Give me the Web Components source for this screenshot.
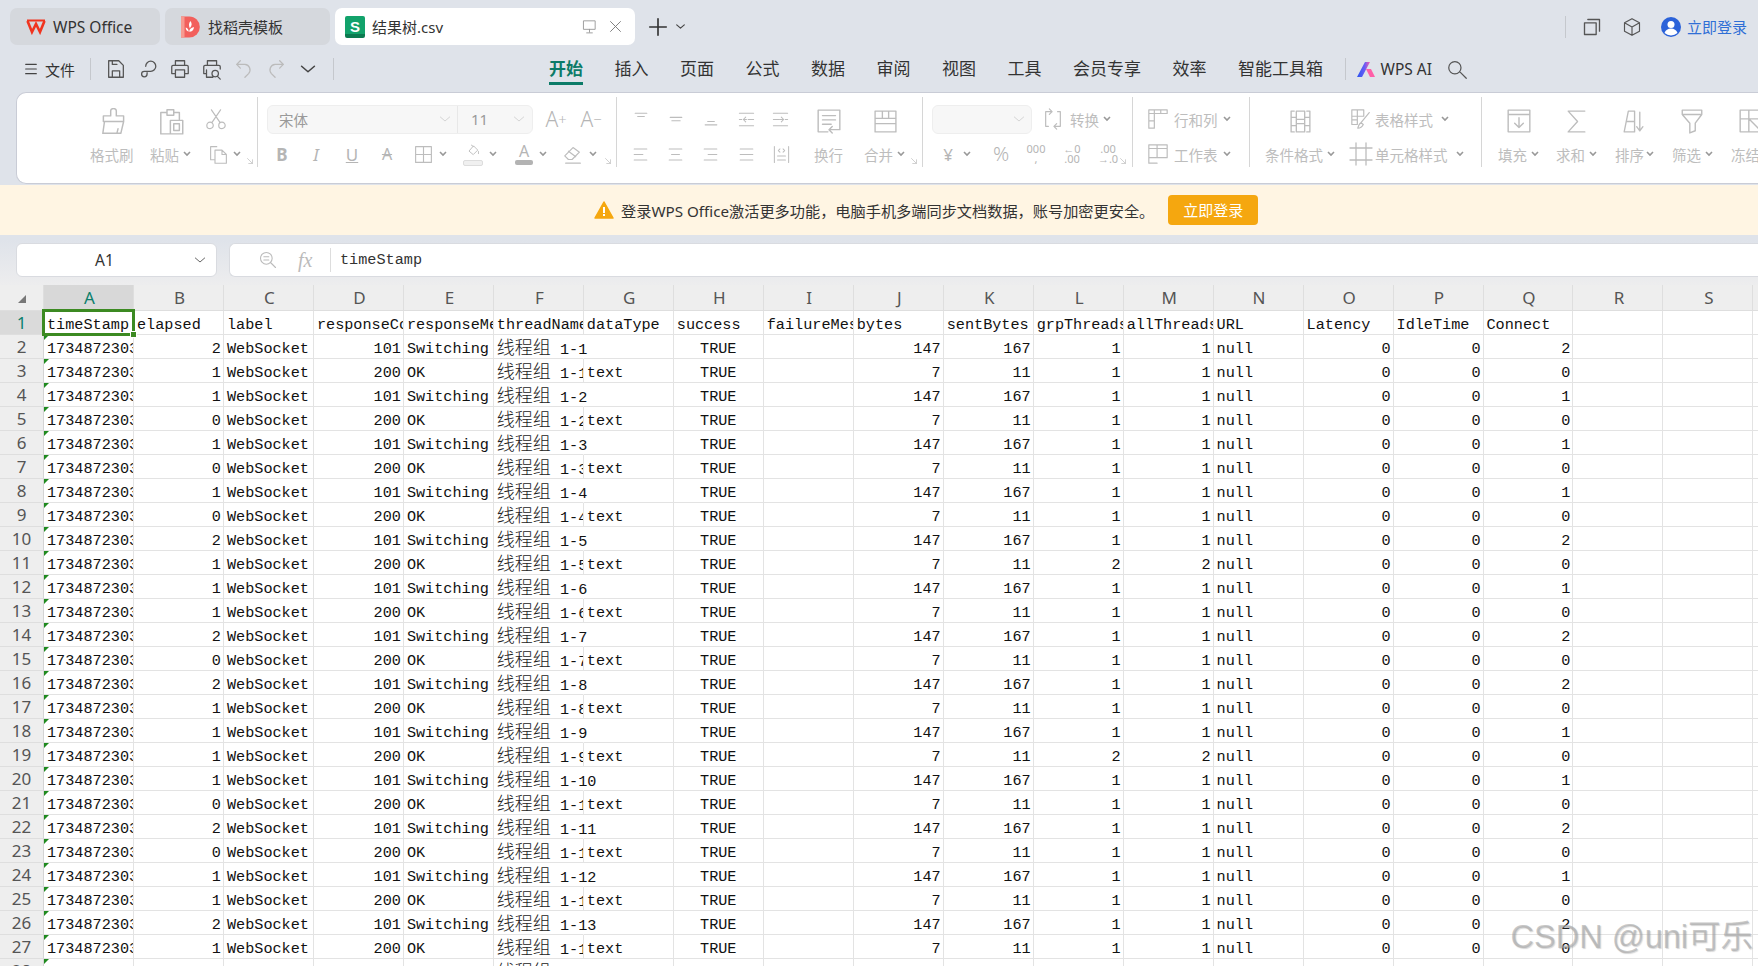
<!DOCTYPE html>
<html lang="zh"><head><meta charset="utf-8"><title>结果树.csv</title>
<style>html,body{margin:0;padding:0;width:1758px;height:966px;overflow:hidden;background:#dfe3ea}</style>
</head><body>
<wps-app>
  <wps-tabbar></wps-tabbar>
  <wps-menubar></wps-menubar>
  <wps-ribbon></wps-ribbon>
  <wps-banner>登录WPS Office激活更多功能，电脑手机多端同步文档数据，账号加密更安全。</wps-banner>
  <wps-formula cell="A1">timeStamp</wps-formula>
  <wps-sheet></wps-sheet>
  <wps-watermark>CSDN @uni可乐</wps-watermark>
</wps-app>
<script>
const UI='"Noto Sans","Noto Sans CJK SC",sans-serif';
const P={
 brush:'M9.5 2.5a2.5 2 0 0 1 5 0V7H21v5H3V7h6.5z M4 12 2.5 22.5h16L21 12 M15 22.5l1-4',
 paste:'M8 4H2.5v19H10 M8 4V1.5h6V4 M8 4v2.5h6V4 M14 4h5v6 M11 11h11v12H11z M14 14h5v6h-5z',
 scissors:'M7.5 16 17 2 M16.5 16 7 2 M9 19a3.5 3.5 0 1 1-7 0 3.5 3.5 0 0 1 7 0z M22 19a3.5 3.5 0 1 1-7 0 3.5 3.5 0 0 1 7 0z',
 copy:'M10 3H3v15h4 M8 7h8l5 5v10H8z M16 7v5h5',
 borders:'M3 3h18v18H3z M12 3v18 M3 12h18',
 eraser:'M3 14 12 5l7 5-8 8H7z M7 9l8 6 M4 22h16',
 fillc:'M6 11l6-7 6 6-6 6z M9 3l3 2 M19 12v3',
 atop:'M5 5h14 M8 9h8', amid:'M5 10h14 M7 14h10', abot:'M8 15h8 M5 19h14',
 indl:'M3 4h18 M3 20h18 M3 12h3 M14 12h7 M12 12H8 M11 9l-3 3 3 3',
 indr:'M3 4h18 M3 20h18 M3 12h7 M18 12h3 M11 12h5 M13 9l3 3-3 3',
 left:'M4 5h16 M4 12h11 M4 19h16', center:'M4 5h16 M7 12h10 M4 19h16', right:'M4 5h16 M9 12h11 M4 19h16', just:'M4 5h16 M4 12h16 M4 19h16',
 dist:'M3 2v20 M21 2v20 M7 19h10 M7 14h10 M10 5 8 7l2 2 M14 5l2 2-2 2',
 wrap:'M22 13V2H2v20h9 M6 7h12 M6 11h12 M6 15h8 M22 13v7H12 M15 17l-3 3 3 3',
 merge:'M2 2h20v20H2z M2 9h20 M9 2v7 M15 2v7 M2 14h20',
 conv:'M11 4H4v16h3 M13 20h7V4h-3 M8 1l3 3-3 3 M16 17l-3 3 3 3',
 rowcol:'M2 2h20v4H2z M8 2v4 M15 2v4 M2 6v16h6V6 M2 14h6',
 sheet:'M2 2h20v4H2z M2 6v16h9 M2 6h20v10H2 M11 2v14',
 cond:'M6 2H3v20h3 M18 2h3v20h-3 M8 2h8v20H8z M8 10h8 M8 14h8 M3 8h5 M16 8h5 M3 16h5 M16 16h5',
 tstyle:'M2 2h13v7H2z M8 2v7 M2 9v9h6V9 M2 13h6 M21 5 12 16 M12 16c-2 1-3 4-3.5 6 3 0 5-2 6-4z',
 cstyle:'M7 1v22 M17 1v22 M1 6h22 M1 18h22',
 fill:'M2 2h20v20H2z M2 6h20 M12 9v9 M8 14l4 4 4-4',
 sum:'M20 2H4l9 10-9 10h16',
 sort:'M4 22 8 2h6v20H4 M6 12h8 M19 3v18 M16 17l3 4 3-4',
 filter:'M3 2h18v4l-6 8v7l-5 2v-9L3 6z M3 6h18',
 freeze:'M2 2h20v20H2z M10 2v20 M2 10h20 M10 10l12 12',
 launch:'M6 6l12 12 M18 9v9H9',
 save:'M4 3h11l5 5v13H4z M8 21v-7h8v7 M8 3v4h5',
 link:'M9.5 9A5.5 5.5 0 1 1 15 14.5H8a3 3 0 1 0 3 3V16',
 print:'M7 8V3h10v5 M7 17H3V9.5A1.5 1.5 0 0 1 4.5 8h15A1.5 1.5 0 0 1 21 9.5V17h-4 M7 13h10v8H7z',
 prev:'M7 8V3h10v5 M6 17H3V9.5A1.5 1.5 0 0 1 4.5 8h15A1.5 1.5 0 0 1 21 9.5V12 M6 13v8h7 M19 17a3.5 3.5 0 1 1-7 0 3.5 3.5 0 0 1 7 0z M18 20l3 3',
 undo:'M8 3 4 7l4 4 M4 7h9a6 6 0 0 1 4 10l-4 4',
 redo:'M16 3l4 4-4 4 M20 7h-9a6 6 0 0 0-4 10l4 4',
 chev:'M5 9l7 6 7-6',
 menu:'M4 5h16 M4 12h16 M4 19h16',
 search:'M16 10a7 7 0 1 1-14 0 7 7 0 0 1 14 0z M15 15l7 7',
 cube:'M12 2l9 5v10l-9 5-9-5V7z M3 7l9 5 9-5 M12 12v10',
 win:'M3 7h14v14H3z M7 3h14v14',
 mon:'M4 4h16v12H4z M12 16v4 M8 21h8',
 x:'M5 5l14 14 M19 5 5 19',
 plus:'M12 3v18 M3 12h18',
 lens:'M17 10a7 7 0 1 1-14 0 7 7 0 0 1 14 0z M15 15l6 6 M7 8h6 M7 12h6'
};
const svg=(n,s,c,w)=>`<svg width="${s}" height="${s}" viewBox="0 0 24 24" fill="none" stroke="${c||'currentColor'}" stroke-width="${w||1.3}" stroke-linejoin="round" stroke-linecap="round" style="display:block"><path d="${P[n]}"/></svg>`;
function shadow(el,html){el.attachShadow({mode:'open'}).innerHTML=html}

class WpsApp extends HTMLElement{connectedCallback(){shadow(this,`<style>:host{display:flex;flex-direction:column;position:relative;width:1758px;height:966px;overflow:hidden;background:linear-gradient(#dfe3ea 0,#dfe3ea 240px,#ededee 285px);font-family:${UI}}</style><slot></slot>`)}}

class WpsTabbar extends HTMLElement{connectedCallback(){shadow(this,`<style>
:host{display:flex;align-items:center;height:37px;padding:8px 0 3px 10px;flex:none;color:#333;font-size:15px}
.t{height:37px;box-sizing:border-box;border-radius:7px;background:#d5d8dd;display:flex;align-items:center;flex:none;white-space:nowrap}
.a{width:150px;padding-left:16px;font-size:15.5px;margin-right:5px}
.b{width:165px;padding-left:16px;margin-right:5px}
.c{width:300px;padding-left:10px;background:#fff;margin-right:12px}
.a svg{margin-right:7px}.b svg{margin-right:7px}
.s{width:20px;height:22px;border-radius:2px;background:linear-gradient(#12a26b 80%,#0b7a50 80%);color:#fff;font:bold 15px "Liberation Sans",sans-serif;display:flex;align-items:center;justify-content:center;margin-right:7px;flex:none}
.sp{flex:1}
.r{display:flex;align-items:center;margin-left:auto;padding-right:11px}
.sep{width:1px;height:22px;background:#c5c8cd}
a{color:#2f6fd6;font-size:15px;margin-left:6px}
</style>
<div class="t a"><svg width="20" height="16" viewBox="0 0 20 16" fill="none"><path d="M1.5 2 6 13l4-8 4 8 4.500-11" stroke="#f0341f" stroke-width="2.600" stroke-linejoin="miter"/><path d="M1 1.500h18" stroke="#f0341f" stroke-width="2"/></svg>WPS Office</div>
<div class="t b"><svg width="20" height="22" viewBox="1 1 17 18"><path d="M1 1h7a9 9 0 0 1 0 18H1z" fill="#f2605c"/><path d="M1 1h3v18H1z" fill="#f79a90"/><path d="M9 5c1.500 2 1.500 4-.5 6-1-2-1-4 .5-6zM8 14c0-2 1.500-3.500 4-4 0 2.500-1.500 4-4 4zM7.500 14c-1.500-.5-2.500-1.500-2.500-3.500 1.500.5 2.500 1.500 2.500 3.500z" fill="#fff"/></svg>找稻壳模板</div>
<div class="t c"><span class="s">S</span>结果树.csv<span class="sp"></span><span style="color:#999;margin-right:9px">${svg('mon',17)}</span><span style="color:#777;margin-right:11px">${svg('x',17)}</span></div>
<span style="color:#333">${svg('plus',22,'#333',1.8)}</span><span style="color:#444;margin-left:5px">${svg('chev',13,'#444',2.2)}</span>
<div class="r"><span class="sep"></span><span style="margin-left:16px;color:#555">${svg('win',20,'#555',1.6)}</span><span style="margin-left:20px">${svg('cube',20,'#555',1.4)}</span>
<svg style="margin-left:19px" width="20" height="20" viewBox="0 0 20 20"><circle cx="10" cy="10" r="10" fill="#2b62d9"/><circle cx="10" cy="7.500" r="3.500" fill="#fff"/><path d="M3.500 16c1-3 3.500-4.500 6.500-4.500s5.500 1.500 6.500 4.500a10 10 0 0 1-13 0z" fill="#fff"/></svg><a>立即登录</a></div>`)}}

class WpsMenubar extends HTMLElement{connectedCallback(){
 const items=['插入','页面','公式','数据','审阅','视图','工具','会员专享','效率','智能工具箱'];
 shadow(this,`<style>
:host{display:flex;align-items:center;height:44px;flex:none;color:#333;font-size:17px;position:relative;box-sizing:border-box;padding:0 0 2px 23px;white-space:nowrap}
.sep{width:1px;height:22px;background:#c5c8cd;flex:none}
.ic{margin-right:10px;flex:none}
.m{margin-right:31.500px;flex:none;line-height:42px;height:42px;position:relative}
.on{color:#0c7b68;font-weight:700}
.on::after{content:"";position:absolute;left:0;right:0;bottom:5px;height:3px;background:#0c7b68}
</style>
<span style="flex:none;margin-right:6px">${svg('menu',16,'#444',1.7)}</span><span style="font-size:15px;margin-right:15px">文件</span><span class="sep" style="margin-right:14px"></span>
${['save','link','print','prev'].map(n=>`<span class="ic">${svg(n,22,'#555',1.4)}</span>`).join('')}
<span class="ic">${svg('undo',22,'#bbb',1.4)}</span><span class="ic">${svg('redo',22,'#bbb',1.4)}</span><span class="ic" style="margin-right:14px">${svg('chev',22,'#444',1.7)}</span>
<span class="sep" style="margin-right:215px"></span>
<span class="m on">开始</span>${items.map(t=>`<span class="m">${t}</span>`).join('')}
<span class="sep" style="margin:0 11px 0 -10px"></span>
<svg width="19" height="17" viewBox="0 0 19 17" style="flex:none;margin-right:5px"><defs><linearGradient id="g" x1="0" x2="1"><stop offset="0" stop-color="#2a55f0"/><stop offset=".6" stop-color="#6a5cf5"/><stop offset="1" stop-color="#ff5fa8"/></linearGradient></defs><path d="M0 16 8 1h5L5 16z" fill="url(#g)"/><path d="M9 8h5l4 8h-5z" fill="#ff5fa8"/></svg>
<span style="font-size:15.500px;color:#333;margin-right:15px">WPS AI</span>${svg('search',21,'#555',1.4)}`)}}

const I=(n,cx,s=20)=>({x:cx-s/2,w:s,h:svg(n,s),st:s>=25?'margin-top:4px;':''});
const T=(t,x,w)=>({x,w,h:t,cls:'tx'});
const C=cx=>({x:cx-4,w:8,h:`<svg width="8" height="6" viewBox="0 0 8 6" style="display:block" fill="none" stroke="#999" stroke-width="1.600"><path d="M1 1l3 3 3-3"/></svg>`});
const Q=cx=>({x:cx-5,w:10,cls:'ln',h:svg('launch',10,'#c8c8c8',2)});
const G=(t,cx,w,st='')=>({x:cx-w/2,w,h:t,cls:'gl',st});
const ROW=(start,items)=>{let c=start,o='';for(const i of items){o+=`<div class="i ${i.cls||''}" style="${i.st||''}margin-left:${(i.x-c).toFixed(1)}px;width:${i.w}px;">${i.h}</div>`;c=i.x+i.w}return o};
const GROUPS=[
 [16,257,[I('brush',112,27),I('paste',170,27),I('scissors',215,22)],
  [T('格式刷',89,44),T('粘贴',149,29),C(186),I('copy',217,21),C(236),Q(249)]],
 [258,616,[{x:267,w:266,h:`<div class="fs"><span style="width:158px">宋体</span><i>${svg('chev',16,'#ccc',1.2)}</i><b></b><span style="width:53px;padding-left:13px;box-sizing:border-box;font-size:15px">11</span><i>${svg('chev',16,'#ccc',1.2)}</i></div>`},
   G('A<sup>+</sup>',556,26,'font-size:21px;font-weight:300;'),G('A<sup>−</sup>',591,26,'font-size:21px;font-weight:300;')],
  [G('<b>B</b>',282,14,'font-size:17px;'),G('<em>I</em>',316,14,'font-size:17px;'),G('<u>U</u>',352,14,'font-size:17px;'),G('<s>A</s>',387,16,'font-size:16px;'),I('borders',423,21),C(443),
   {x:462,w:22,h:`<div style="display:flex;flex-direction:column;align-items:center">${svg('fillc',17)}<span style="width:18px;height:4px;background:#f0f0f0;border:1px solid #ddd;border-radius:2px"></span></div>`},C(493),
   {x:514,w:20,h:`<div style="display:flex;flex-direction:column;align-items:center;line-height:15px;font-size:16px" class="gl">A<span style="width:18px;height:5px;background:#b3b3b3;border-radius:2px;margin-top:1px"></span></div>`},C(543),
   I('eraser',573,22),C(593),Q(608)]],
 [617,922,[I('atop',641),I('amid',676),I('abot',711),I('indl',746,19),I('indr',780,19),I('wrap',829,26),I('merge',885,25)],
  [I('left',640,19),I('center',675,19),I('right',710,19),I('just',746,19),I('dist',781,19),T('换行',814,30),T('合并',864,30),C(901),Q(914)]],
 [923,1132,[{x:932,w:100,h:`<div class="fs" style="justify-content:flex-end"><i>${svg('chev',16,'#ccc',1.2)}</i></div>`},I('conv',1053,22),T('转换',1070,30),C(1107)],
  [G('¥',948,14,'font-size:17px;'),C(967),G('%',1001,18,'font-size:20px;font-weight:300;'),G('<span class="st">000<br>,</span>',1036,22),G('<span class="st">←0<br>.00</span>',1072,24),G('<span class="st">.00<br>→.0</span>',1108,24),Q(1123)]],
 [1133,1249,[I('rowcol',1158,22),T('行和列',1174,44),C(1227)],[I('sheet',1158,22),T('工作表',1174,44),C(1227)]],
 [1250,1481,[I('cond',1300,25),I('tstyle',1361,22),T('表格样式',1375,60),C(1445)],
  [T('条件格式',1265,60),C(1331),I('cstyle',1361,24),T('单元格样式',1375,75),C(1460)]],
 [1482,1800,[I('fill',1519,26),I('sum',1576,25),I('sort',1632,25),I('filter',1692,26),I('freeze',1751,26)],
  [T('填充',1498,29),C(1535),T('求和',1556,29),C(1593),T('排序',1615,29),C(1650),T('筛选',1672,29),C(1709),T('冻结',1731,29)]]
];
class WpsRibbon extends HTMLElement{connectedCallback(){shadow(this,`<style>
:host{display:flex;flex:none;height:92px;box-sizing:border-box;margin-left:16px;background:#fff;border-radius:10px 0 0 10px;border:1px solid #c9ccd6;border-width:1px 0 1px 1px;padding-top:4px;color:#bdbdbd;font-size:14.500px;overflow:hidden;align-items:flex-start}
.g{flex:none;height:70px;box-sizing:border-box;border-right:1px solid #d6d6d6;display:flex;flex-direction:column}
.g.e{border-right:0}
.r{display:flex;align-items:center;flex:none;white-space:nowrap}
.r1{height:44px}.r2{height:26px}
.i{flex:none;display:flex;align-items:center;justify-content:center}
.tx{justify-content:flex-start}
.ln{align-self:flex-end;margin-bottom:1px}
.gl{color:#b5b5b5;font-family:"Noto Sans",sans-serif;line-height:1}
.gl sup{font-size:.7em;line-height:0;vertical-align:.55em}
.st{display:block;font-size:11px;line-height:10px;text-align:center}
.fs{width:100%;height:29px;box-sizing:border-box;background:#f7f7f7;border:1px solid #eee;border-radius:6px;display:flex;align-items:center;color:#9a9a9a;font-size:14.500px;padding-left:11px}
.fs i{display:block;flex:none;width:16px;margin-right:4px}
.fs b{width:1px;height:27px;background:#e8e8e8;margin-left:0}
.fs span{flex:none}
</style>${GROUPS.map((g,k)=>{const w=g[1]-g[0]+1;return `<div class="g ${k==6?'e':''}" style="width:${k==0?w-1:w}px"><div class="r r1">${ROW(g[0],g[2])}</div><div class="r r2">${ROW(g[0],g[3])}</div></div>`}).join('')}`)}}

class WpsBanner extends HTMLElement{connectedCallback(){shadow(this,`<style>
:host{display:flex;align-items:center;flex:none;height:50px;margin-top:1px;background:#fff5e3;padding:0 0 1px 594px;color:#333;font-size:15.200px;white-space:nowrap;box-sizing:border-box}
svg{margin-right:7px;flex:none}
button{all:unset;box-sizing:border-box;margin-left:14px;width:90px;height:30px;background:#f5a70f;color:#fff;border-radius:4px;text-align:center;font-size:15px;line-height:30px;flex:none}
</style><svg width="20" height="18" viewBox="0 0 20 18"><path d="M10 1 19 17H1z" fill="#f5a70f" stroke="#f5a70f" stroke-linejoin="round" stroke-width="1.500"/><path d="M9 6h2v6H9zM9 13h2v2H9z" fill="#fff"/></svg><slot></slot><button>立即登录</button>`)}}

class WpsFormula extends HTMLElement{connectedCallback(){shadow(this,`<style>
:host{display:flex;flex:none;height:34px;margin-top:8px;margin-bottom:8px;padding-left:16px;gap:12px;box-sizing:content-box}
.b{background:#fff;border:1px solid #d9dbe0;border-radius:6px;box-sizing:border-box;height:34px;display:flex;align-items:center;color:#333}
.n{width:201px;flex:none;font-size:15.500px;padding-right:8px}
.n span{flex:1;text-align:center}
.f{flex:1;border-radius:6px 0 0 6px;border-right:0}
.ic{margin-left:28px;flex:none}
.fx{font:italic 20px "Liberation Serif",serif;color:#bbb;width:22px;margin-left:20px;flex:none}
.sep{width:1px;height:24px;background:#ddd;margin:0 9px 0 10px;flex:none}
.v{font:15.200px "Liberation Mono",monospace;color:#333}
</style><div class="b n"><span>${this.getAttribute('cell')}</span>${svg('chev',16,'#666',1.5)}</div>
<div class="b f"><span class="ic">${svg('lens',20,'#bbb',1.3)}</span><span class="fx">fx</span><span class="sep"></span><span class="v"><slot></slot></span></div>`)}}

class WpsSheet extends HTMLElement{connectedCallback(){
 const cols='ABCDEFGHIJKLMNOPQRSTU'.split('');
 const heads=['timeStamp','elapsed','label','responseCode','responseMessage','threadName','dataType','success','failureMessage','bytes','sentBytes','grpThreads','allThreads','URL','Latency','IdleTime','Connect'];
 const B=[2,1,1,0,1,0,1,0,2,1,1,1,2,0,2,1,1,1,1,0,2,0,1,1,2,1,1];
 const Q=[2,0,1,0,1,0,1,0,2,0,1,0,2,0,2,0,1,0,1,0,2,0,1,0,2,0,1];
 let h='<div class="hd corner"><i></i></div>';
 cols.forEach((c,i)=>h+=`<div class="hd ch${i==0?' on':''}">${c}</div>`);
 h+='<div class="hd rh on">1</div>';
 cols.forEach((c,i)=>{const t=heads[i]||'';h+=`<div class="c l${i==0?' a1':''}"><span>${t}</span>${i==0?'<em></em>':''}</div>`});
 for(let r=2;r<=28;r++){
  const odd=r%2==1,k=r-2,n=Math.floor(r/2);
  const two=(r==11||r==19)?2:1;
  const row=[
   ['1734872303','l a'],[B[k],'r'],['WebSocket','l'],[odd?200:101,'r'],[odd?'OK':'Switching','l'],
   ['<b>线程组</b> 1-'+n,'l f'+(odd?'':' ov')],[odd?'text':'','l'],['TRUE','m'],['','l'],[odd?7:147,'r'],[odd?11:167,'r'],[two,'r'],[two,'r'],['null','l'],[0,'r'],[0,'r'],[Q[k],'r'],['','l'],['','l'],['','l'],['','l']];
  h+=`<div class="hd rh">${r}</div>`;
  row.forEach(([t,c])=>h+=`<div class="c ${c}"><span>${t}</span></div>`);
 }
 shadow(this,`<style>
:host{display:grid;flex:none;grid-template-columns:44px repeat(21,89.970px);grid-template-rows:26px;grid-auto-rows:24px;background:#fff;width:1758px;overflow:hidden;font:15.200px "Liberation Mono","Noto Sans CJK SC",monospace;color:#111}
.hd{background:#eeeeee;color:#555;font:17px "Noto Sans",sans-serif;display:flex;align-items:center;justify-content:center;box-sizing:border-box;border-right:1px solid #dedede;border-bottom:1px solid #dedede}
.ch{padding-left:2px}
.corner i{width:0;height:0;border-style:solid;border-width:0 0 8px 8px;border-color:transparent transparent #777 transparent;margin:3px 0 0 0}
.ch.on{background:#d8d8d8;color:#0b7f6c}
.rh{border-right:1px solid #d4d4d4}
.rh.on{background:#dadada;color:#0b7f6c}
.c{box-sizing:border-box;border-right:1px solid #e3e3e3;border-bottom:1px solid #e3e3e3;display:flex;align-items:center;padding:5px 3px 0;white-space:nowrap;overflow:hidden;position:relative;background:#fff;min-width:0;line-height:18px}
.c span{flex:none}
.f{padding-top:3px}
.c b{font:300 18px "Noto Sans CJK SC",sans-serif;line-height:18px;color:#222}
.r{justify-content:flex-end;padding-right:2px}
.m{justify-content:center}
.ov{overflow:visible;z-index:1;border-right-color:transparent;background:transparent}
.a::before{content:"";position:absolute;left:0;top:0;border-style:solid;border-width:5px 5px 0 0;border-color:#1f8a1f transparent transparent transparent}
.a1{overflow:visible;z-index:2}
.a1 em{position:absolute;left:-2px;top:-2px;right:-2px;bottom:-2px;border:3px solid #3c8a22;pointer-events:none}
.a1 em::after{content:"";position:absolute;right:-5px;bottom:-5px;width:5px;height:5px;background:#3c8a22;border:1px solid #fff}
</style>${h}`)}}

class WpsWatermark extends HTMLElement{connectedCallback(){shadow(this,`<style>
:host{position:absolute;right:5px;bottom:9px;font:32.500px "Liberation Sans","Noto Sans CJK SC",sans-serif;color:rgba(165,165,165,.6);text-shadow:1px 1px 1px rgba(120,120,120,.3);white-space:nowrap;z-index:5}
</style><slot></slot>`)}}

customElements.define('wps-app',WpsApp);
customElements.define('wps-tabbar',WpsTabbar);
customElements.define('wps-menubar',WpsMenubar);
customElements.define('wps-ribbon',WpsRibbon);
customElements.define('wps-banner',WpsBanner);
customElements.define('wps-formula',WpsFormula);
customElements.define('wps-sheet',WpsSheet);
customElements.define('wps-watermark',WpsWatermark);
</script>
</body></html>
